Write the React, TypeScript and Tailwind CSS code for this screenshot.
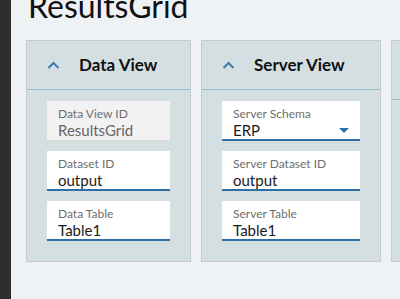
import React from 'react';

type Field = {
  label: string;
  value: string;
  disabled?: boolean;
  select?: boolean;
};

const ChevronUp = () => (
  <svg width="13" height="9" viewBox="0 0 13 9" className="text-[#3d7ab0]">
    <path d="M1.5 7 L6.5 2 L11.5 7" fill="none" stroke="currentColor" strokeWidth="2" />
  </svg>
);

const FieldBox: React.FC<{ field: Field; width: string }> = ({ field, width }) => (
  <div
    className={`${width} h-[40px] flex flex-col pl-[11px] pr-[12px] pt-[6px] ${
      field.disabled ? 'bg-[#f2f2f2] border-b border-[#dcdcdc]' : 'bg-white border-b-2 border-[#2f6fa6]'
    }`}
  >
    <span className="text-[12px] leading-[14px] text-[#6e6e6e]">{field.label}</span>
    <div className="flex items-center justify-between">
      <span className={`text-[15px] leading-[18px] ${field.disabled ? 'text-[#666]' : 'text-[#1a1a1a]'}`}>
        {field.value}
      </span>
      {field.select && (
        <svg width="10" height="5" viewBox="0 0 10 5" className="mr-[-1px]">
          <path d="M0 0 H10 L5 5 Z" fill="#2f6fa6" />
        </svg>
      )}
    </div>
  </div>
);

const Panel: React.FC<{ title: string; fields: Field[]; fieldWidth: string }> = ({ title, fields, fieldWidth }) => (
  <div className="shrink-0 bg-[#d4dfe1] border border-[#c6cacc]">
    {/* Header */}
    <div className="h-[49px] flex items-center pl-[20px] border-b border-[#93bccd]">
      <ChevronUp />
      <span className="ml-[19px] text-[17px] font-bold text-[#111]">{title}</span>
    </div>
    {/* Fields */}
    <div className="px-[20px] pt-[11px] pb-[19px] flex flex-col gap-[10px]">
      {fields.map((f) => (
        <FieldBox key={f.label} field={f} width={fieldWidth} />
      ))}
    </div>
  </div>
);

export default function App() {
  return (
    <div className="w-[400px] h-[299px] overflow-hidden flex bg-[#eff2f5]" style={{ fontFamily: 'Lato, "Noto Sans", sans-serif' }}>
      <div className="w-[11px] shrink-0 bg-[#2d2d2d]" />
      <div className="flex-1 pl-[15px] overflow-hidden">
        <h1 className="mt-[-14px] ml-[2px] h-[54px] text-[32px] leading-[40px] text-[#111]">ResultsGrid</h1>
        <div className="flex gap-[10px]">
          <Panel
            title="Data View"
            fieldWidth="w-[123px]"
            fields={[
              { label: 'Data View ID', value: 'ResultsGrid', disabled: true },
              { label: 'Dataset ID', value: 'output' },
              { label: 'Data Table', value: 'Table1' },
            ]}
          />
          <Panel
            title="Server View"
            fieldWidth="w-[138px]"
            fields={[
              { label: 'Server Schema', value: 'ERP', select: true },
              { label: 'Server Dataset ID', value: 'output' },
              { label: 'Server Table', value: 'Table1' },
            ]}
          />
          <div className="shrink-0 w-[60px] h-[222px] bg-[#d4dfe1] border border-[#c6cacc]">
            <div className="h-[59px] border-b border-[#93bccd]" />
          </div>
        </div>
      </div>
    </div>
  );
}
